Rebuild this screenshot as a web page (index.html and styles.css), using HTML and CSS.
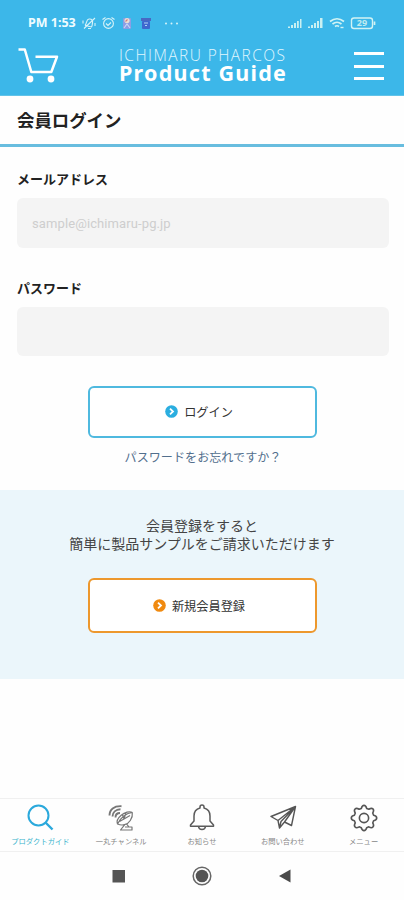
FILE: index.html
```html
<!DOCTYPE html>
<html lang="ja">
<head>
<meta charset="utf-8">
<meta name="viewport" content="width=device-width, initial-scale=1">
<title>会員ログイン</title>
<link rel="stylesheet" href="styles.css">
</head>
<body>
<header class="header">
  <div class="status">
    <span class="time">PM 1:53</span>
    <svg class="s-left" width="100" height="16" viewBox="0 0 100 16" fill="none" stroke="#d8f3f8" stroke-width="1.1">
      <path d="M3 10.5c2-2 1-6 4-6.500 3-.5 4 2 3.500 4-.5 2 0 2.500-1 4L3 10.500M2 13.500 13 3M1 5.500v3M13 8v3M6 13.500h3"/>
      <circle cx="26.500" cy="8.500" r="4.900"/><path d="M20.500 4.500l3-2M29.500 2.500l3 2M24 8.500l2 2 3-3"/>
      <rect x="41" y="3" width="8" height="11" rx="1" fill="#8c9de4" stroke="none"/><circle cx="45" cy="5.500" r="2.600" fill="#eadfd4" stroke="none"/><path d="M43.500 6.500l2-2" stroke="#d17b83"/><path d="M42 13l3-4 3 4" stroke="#c9d7f7"/>
      <rect x="59" y="3" width="10" height="3" fill="#4768c4" stroke="none"/><rect x="60" y="6" width="8" height="8" rx="1" fill="#3d67cf" stroke="none"/><path d="M62 8h4M63 10.500h2" stroke="#b2d2f5"/>
      <g fill="#d8f3f8" stroke="none"><circle cx="84" cy="8.500" r="1"/><circle cx="89.500" cy="8.500" r="1"/><circle cx="95" cy="8.500" r="1"/></g>
    </svg>
    <svg class="s-right" width="92" height="16" viewBox="0 0 92 16">
      <path d="M1 13v-1.500h2V13zM4 13v-3h2v3zM7 13V8h2v5zM10 13V6h1.800v7zM13 13V4h1.500v9zM21 13v-1.500h2V13zM24 13v-3h2v3zM27 13V8h2v5zM30 13V6h2v7zM33 13V3h2.500v10z" fill="#c9f0f2"/>
      <g fill="none" stroke="#d2f3f4" stroke-width="1.700"><path d="M43 6.500q7-5.500 14 0M45.500 9q4.500-3.500 9 0M48 11.500q2-1.500 4 0"/><path d="M53.500 12.500h3" stroke-width="1.400"/><rect x="64.500" y="3" width="21" height="10.500" rx="2.500" stroke-width="1.400"/><path d="M87.500 6.500v3.500"/></g>
      <text x="75" y="11.400" text-anchor="middle" class="battery">29</text>
    </svg>
  </div>
  <div class="bar">
    <svg class="cart" width="42" height="38" viewBox="0 0 42 38" fill="none" stroke="#fff" stroke-width="2.500" stroke-linejoin="round"><path d="M.5 2.500h6.300l6.500 22.500h20L39 9.700H17.500"/><circle cx="12" cy="32" r="3.400" fill="#fff" stroke="none"/><circle cx="33" cy="32" r="3.400" fill="#fff" stroke="none"/></svg>
    <div class="logo"><span class="brand">ICHIMARU PHARCOS</span><strong class="guide">Product Guide</strong></div>
    <div class="burger"><i></i><i></i><i></i></div>
  </div>
</header>
<h1 class="title">会員ログイン</h1>
<main>
  <form class="form">
    <label class="label" for="mail">メールアドレス</label>
    <input class="field" id="mail" type="email" placeholder="sample@ichimaru-pg.jp">
    <label class="label second" for="pass">パスワード</label>
    <input class="field" id="pass" type="password">
    <button class="button" type="button"><svg width="13" height="13" viewBox="0 0 13 13"><circle cx="6.500" cy="6.500" r="6.300" fill="#2baee0"/><path d="M5 3.600 8 6.500 5 9.400" fill="none" stroke="#fff" stroke-width="1.800"/></svg>ログイン</button>
    <a class="forgot">パスワードをお忘れですか？</a>
  </form>
  <section class="register">
    <p class="lead"><span>会員登録をすると</span><span>簡単に製品サンプルをご請求いただけます</span></p>
    <button class="button orange" type="button"><svg width="13" height="13" viewBox="0 0 13 13"><circle cx="6.500" cy="6.500" r="6.300" fill="#f08a10"/><path d="M5 3.600 8 6.500 5 9.400" fill="none" stroke="#fff" stroke-width="1.800"/></svg>新規会員登録</button>
  </section>
</main>
<footer class="footer">
  <nav class="tabs">
    <a class="tab active"><svg width="28" height="28" viewBox="0 0 28 28" fill="none" stroke="#2ba9dc" stroke-width="2"><circle cx="12.500" cy="11.500" r="10"/><path d="M19.500 18.500l7 7" stroke-width="2.400"/></svg><span>プロダクトガイド</span></a>
    <a class="tab"><svg width="28" height="28" viewBox="0 0 28 28" fill="none" stroke="#777" stroke-width="1.200" stroke-linejoin="round"><path d="M2.500 11.500C2.500 5.500 7 1.800 14.500 2.200M5.500 12.500c0-4.300 3.300-7 8-7.200M8.500 13.500c0-2.700 1.800-4.500 4.500-4.500" stroke-width="1.900"/><path d="M25.300 8.500C19.500 9 13.500 13.500 10.500 20c4.500 2 10 1 12.800-3.500 1.700-2.700 2.500-5 2-8zM10.500 20c-1-2.500.5-6 3.700-8.700 3.500-3 8.500-4.600 11.100-2.800M15.500 11l1.500 4 2-6.500M17 15l6-3.500M12.500 17.500l4.500-2.500M19.500 19.800l2.500 3.200h3v3H13.500l4.500-5.700M18 23h4"/></svg><span>一丸チャンネル</span></a>
    <a class="tab"><svg width="28" height="28" viewBox="0 0 28 28" fill="none" stroke="#5b5b5b" stroke-width="1.500" stroke-linejoin="round"><path d="M12 4V3a2 2 0 0 1 4 0v1c4 1 6 4 6 8v5l3.500 4v1.300h-23V21L6 17v-5c0-4 2-7 6-8zM10.500 22.500c.5 4 6.500 4 7 0"/></svg><span>お知らせ</span></a>
    <a class="tab"><svg width="28" height="28" viewBox="0 0 28 28" fill="none" stroke="#555" stroke-width="1.400" stroke-linejoin="round"><path d="M26.500 2.500 2 12.500l7 4L26.500 2.500 22.500 21.500l-7-3.500M26.500 2.500 12 17.500l-1.500 6.500M9 16.500l1.500 7.500 5-6L26.500 2.500"/></svg><span>お問い合わせ</span></a>
    <a class="tab"><svg width="28" height="28" viewBox="1 1 26 25" fill="none" stroke="#555" stroke-width="1.500" stroke-linejoin="round"><path d="M11.500 4.600Q12.300 1.800 14 1.800t2.500 2.800l2 .8q2.500-1.500 3.800-.3t-.2 3.800l.8 2q2.900.7 2.900 2.600t-2.900 2.600l-.8 2q1.500 2.500.2 3.800t-3.800-.2l-2 .8q-.8 2.700-2.500 2.700t-2.500-2.700l-2-.8q-2.500 1.500-3.800.2t.2-3.800l-.8-2q-2.900-.7-2.900-2.600t2.900-2.600l.8-2q-1.500-2.500-.2-3.800t3.800.3z"/><circle cx="14" cy="13.500" r="4.300"/></svg><span>メニュー</span></a>
  </nav>
  <div class="system">
    <svg width="24" height="24" viewBox="0 0 24 24"><path d="M5.500 6H18v12.500H5.500z" fill="#555"/></svg>
    <svg width="24" height="24" viewBox="0 0 24 24"><circle cx="12" cy="12" r="8.800" fill="none" stroke="#666" stroke-width="1.500"/><circle cx="12" cy="12" r="6.300" fill="#555"/></svg>
    <svg width="24" height="24" viewBox="0 0 24 24"><path d="M17.500 5.500v13L6 12z" fill="#4a4a4a"/></svg>
  </div>
</footer>
</body>
</html>
```
FILE: styles.css
```css
* { box-sizing: border-box; }
body { margin: 0; width: 100%; height: 900px; display: flex; flex-direction: column; background: #fefefe; color: #222; font-family: "Noto Sans CJK JP", sans-serif; }
svg { display: block; flex: none; }
.header { height: 96px; flex: none; background: #3cb7e9; color: #fff; border-bottom: 1px solid #62c3e8; }
.status { height: 31px; padding: 14px 25px 0 28px; display: flex; align-items: center; }
.time { font: 700 12.500px/16px "Noto Sans", sans-serif; width: 49px; margin-right: 5px; white-space: nowrap; color: #effcff; }
.s-right { margin-left: auto; }
.battery { font: 700 9px "Noto Sans", sans-serif; fill: #c0ebef; }
.bar { height: 64px; padding: 16px 20px 0 18px; display: flex; }
.logo { width: 170px; margin-left: 59px; display: flex; flex-direction: column; white-space: nowrap; }
.brand { font: 300 15.500px/17px "Open Sans", sans-serif; letter-spacing: 1.450px; color: #e0f6fe; }
.guide { font: 700 21.500px/18px "Noto Sans", sans-serif; letter-spacing: 1.250px; }
.burger { width: 30px; height: 28px; margin: 5px 0 0 auto; display: flex; flex-direction: column; justify-content: space-between; }
.burger i { height: 3px; background: #fff; }
.title { margin: 0; height: 51px; flex: none; padding-left: 17px; border-bottom: 3px solid #68bddf; font-size: 17.400px; line-height: 48px; font-weight: 700; }
main { flex: none; }
.form { height: 343px; padding: 22px 15px 0 17px; display: flex; flex-direction: column; align-items: stretch; }
.label { font-size: 13px; line-height: 20px; height: 20px; font-weight: 700; }
.second { margin-top: 30px; }
.field { width: 100%; height: 50px; flex: none; margin-top: 9px; border: 0; border-radius: 6px; background: #f4f4f4; padding: 0 15px; font: 13px Roboto, sans-serif; letter-spacing: .1px; }
.second + .field { height: 49px; }
.field::placeholder { color: #cecece; opacity: 1; }
.button { width: 229px; height: 52px; flex: none; margin: 30px 0 0 71px; padding: 0 7px 1px 0; border: 2px solid #4fb9df; border-radius: 6px; background: #fff; color: #333; display: flex; align-items: center; justify-content: center; gap: 6px; font: 12.200px "Noto Sans CJK JP", sans-serif; }
.forgot { margin-top: 9px; text-align: center; font-size: 12.100px; line-height: 20px; color: #526f8d; }
.register { height: 189px; background: #ebf6fb; padding-top: 26px; }
.lead { margin: 0; display: flex; flex-direction: column; align-items: center; font-size: 14px; line-height: 18px; color: #444; }
.orange { height: 55px; margin: 26px 0 0 88px; padding-bottom: 0; border-color: #ed982d; }
.footer { margin-top: auto; }
.tabs { height: 54px; border-top: 1px solid #f0f0f0; border-bottom: 1px solid #f0f0f0; display: grid; grid-template-columns: repeat(5, 1fr); }
.tab { display: flex; flex-direction: column; align-items: center; padding-top: 5px; font-size: 7.300px; line-height: 10px; color: #888; white-space: nowrap; }
.tab span { margin-top: 4px; }
.active { color: #39b4cd; }
.system { height: 48px; padding: 12px 107px 0; display: flex; justify-content: space-between; }
```
